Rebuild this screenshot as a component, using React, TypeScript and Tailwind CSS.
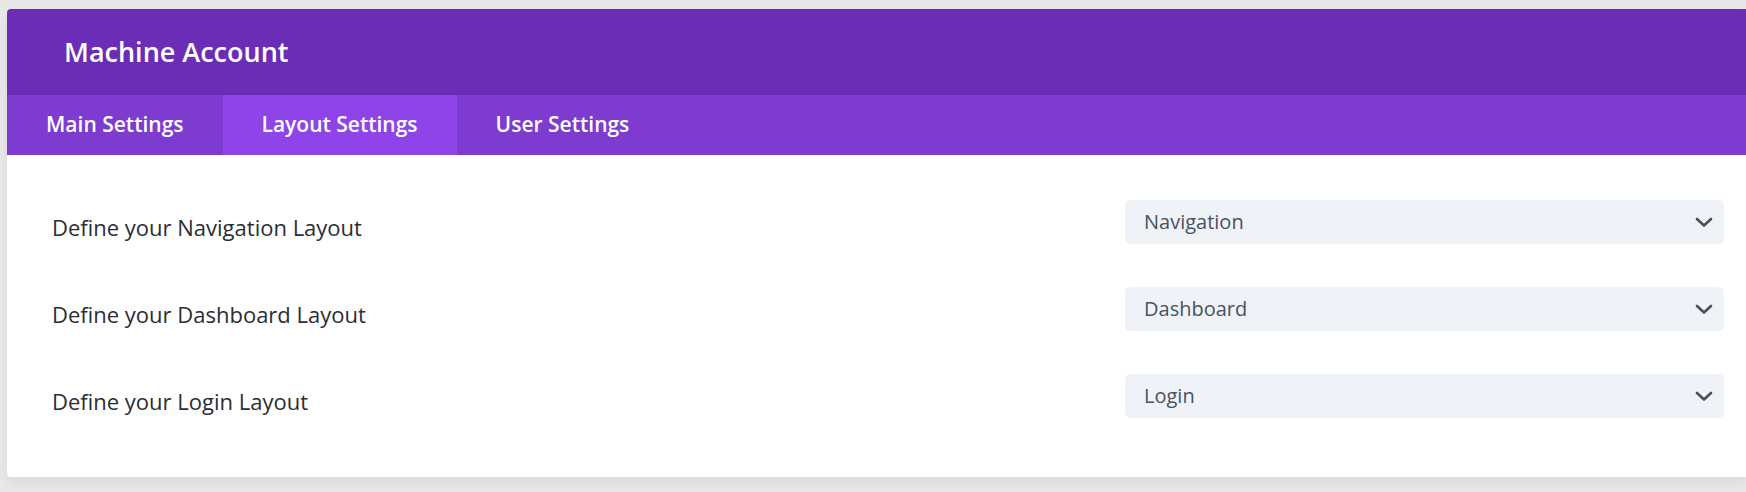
import React from "react";

const rows = [
  { label: "Define your Navigation Layout", value: "Navigation" },
  { label: "Define your Dashboard Layout", value: "Dashboard" },
  { label: "Define your Login Layout", value: "Login" },
];

const tabs = ["Main Settings", "Layout Settings", "User Settings"];

function Chevron() {
  return (
    <svg width="18" height="12" viewBox="0 0 18 12" fill="none">
      <path d="M2 3l7 6.5L16 3" stroke="#4b4f57" strokeWidth="2.6" strokeLinecap="round" strokeLinejoin="round" />
    </svg>
  );
}

export default function App() {
  return (
    <div
      className="min-h-[492px] w-full bg-[#e8e8e8] pl-[7px] pt-[9px] pb-[15px] overflow-hidden"
      style={{ fontFamily: '"Open Sans", "Noto Sans", sans-serif' }}
    >
      <div className="bg-white rounded-l-[4px] overflow-hidden shadow-[0_6px_14px_rgba(0,0,0,0.06)]">
        <div className="h-[86px] bg-[#6b2db6] flex items-center pl-[57px]">
          <h1 className="text-white text-[27px] font-semibold tracking-[0px] leading-none pb-[2px]">Machine Account</h1>
        </div>
        <div className="h-[60px] bg-[#7d3bd0] flex">
          {tabs.map((t) => (
            <div
              key={t}
              className={
                "h-full flex items-center px-[39px] text-white text-[21px] font-semibold " +
                (t === "Layout Settings" ? "bg-[#8f44ea]" : "")
              }
            >
              {t}
            </div>
          ))}
        </div>
        <div className="pl-[45px] pr-[22px] pt-[45px] pb-[59px] flex flex-col gap-[43px]">
          {rows.map((r) => (
            <div key={r.label} className="flex items-center justify-between h-[44px]">
              <div className="text-[22px] font-medium text-[#2b2d36] pt-[11px]">{r.label}</div>
              <div className="w-[599px] h-[44px] bg-[#eff3f8] rounded-[5px] flex items-center justify-between pl-[19px] pr-[11px]">
                <span className="text-[20px] font-medium text-[#4a5160] pb-[1px]">{r.value}</span>
                <Chevron />
              </div>
            </div>
          ))}
        </div>
      </div>
    </div>
  );
}
